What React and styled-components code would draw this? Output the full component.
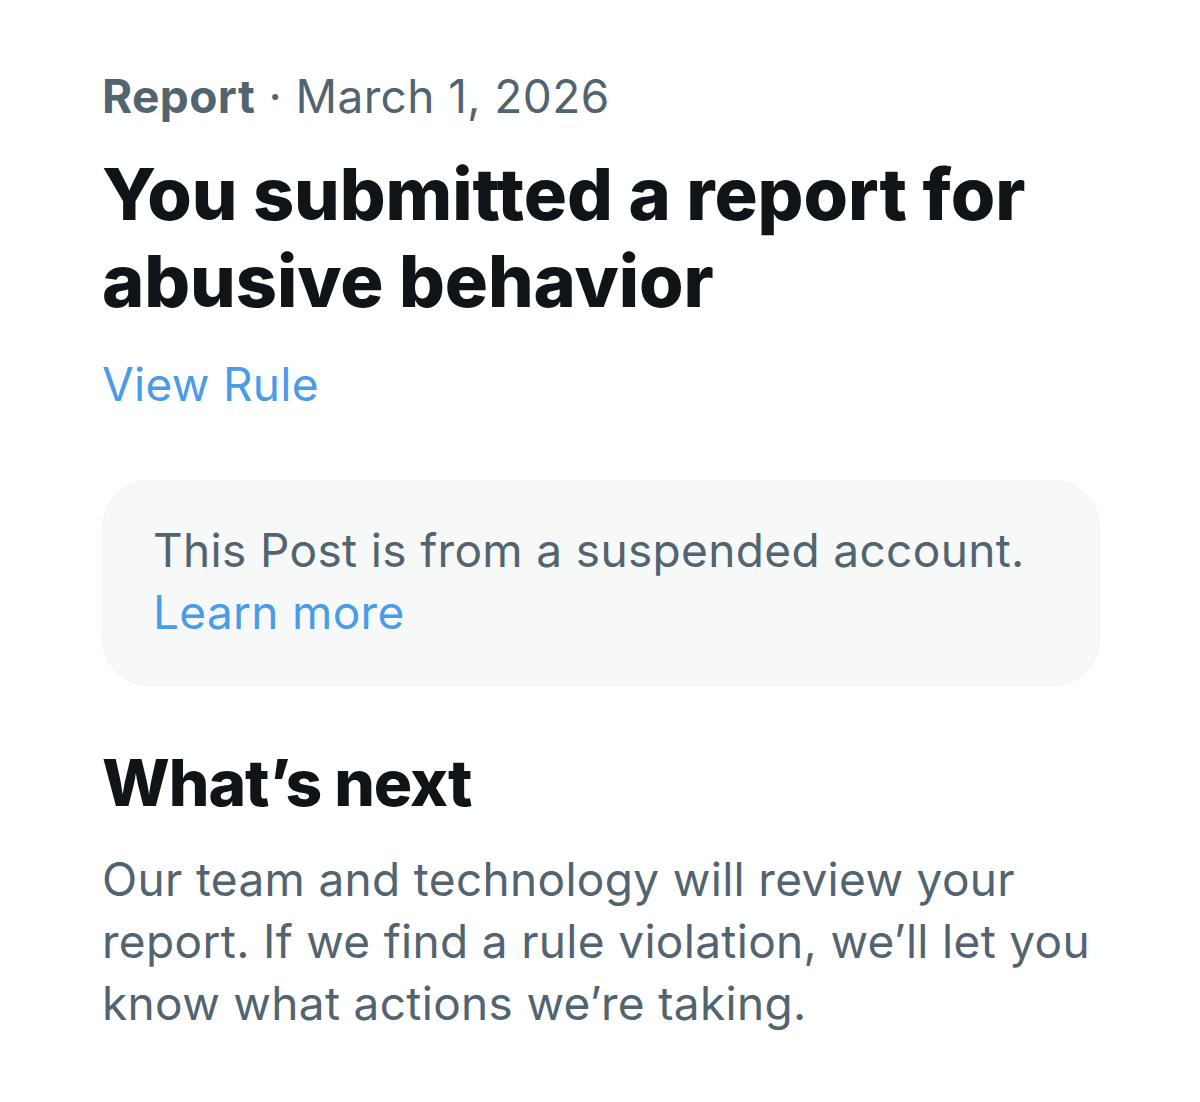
import React from "react";
import styled, { createGlobalStyle } from "styled-components";

const Global = createGlobalStyle`
  html, body { margin: 0; padding: 0; background: #ffffff; }
  body { font-family: Inter, Roboto, "Noto Sans", sans-serif; -webkit-font-smoothing: antialiased; }
`;

const Page = styled.main`
  width: 1200px;
  min-height: 1102px;
  box-sizing: border-box;
  padding: 65px 100px 0 102px;
  display: flex;
  flex-direction: column;
`;

const Meta = styled.div`
  font-size: 46px;
  line-height: 62px;
  color: #536471;
  letter-spacing: 0.4px;
`;

const MetaStrong = styled.span`
  font-weight: 700;
`;

const Title = styled.h1`
  margin: 23px 0 0;
  font-size: 72px;
  line-height: 87px;
  font-weight: 800;
  color: #0f1419;
  letter-spacing: -0.1px;
`;

const Link = styled.a`
  color: #4a9be8;
  text-decoration: none;
  font-size: 46px;
  line-height: 62px;
  letter-spacing: 0.3px;
  cursor: pointer;
`;

const RuleLink = styled(Link)`
  display: block;
  margin-top: 29px;
`;

const Notice = styled.div`
  margin-top: 65px;
  width: 998px;
  box-sizing: border-box;
  padding: 38px 50px 42px;
  background: #f7f9f9;
  border: 1px solid #eff3f4;
  border-radius: 48px;
`;

const NoticeText = styled.p`
  margin: 0;
  font-size: 46px;
  line-height: 62px;
  color: #536471;
  letter-spacing: 0.35px;
`;

const SectionTitle = styled.h2`
  margin: 58px 0 0;
  font-size: 64px;
  line-height: 78px;
  font-weight: 800;
  color: #0f1419;
  letter-spacing: -1px;
`;

const Body = styled.p`
  margin: 26px 0 0;
  font-size: 46px;
  line-height: 62px;
  color: #536471;
  letter-spacing: 0.32px;
  max-width: 1000px;
`;

export default function App() {
  return (
    <>
      <Global />
      <Page>
        <Meta>
          <MetaStrong>Report</MetaStrong> · March 1, 2026
        </Meta>
        <Title>
          You submitted a report for
          <br />
          abusive behavior
        </Title>
        <RuleLink>View Rule</RuleLink>
        <Notice>
          <NoticeText>
            This Post is from a suspended account.
            <br />
            <Link>Learn more</Link>
          </NoticeText>
        </Notice>
        <SectionTitle>What’s next</SectionTitle>
        <Body>
          Our team and technology will review your
          <br />
          report. If we find a rule violation, we’ll let you
          <br />
          know what actions we’re taking.
        </Body>
      </Page>
    </>
  );
}
